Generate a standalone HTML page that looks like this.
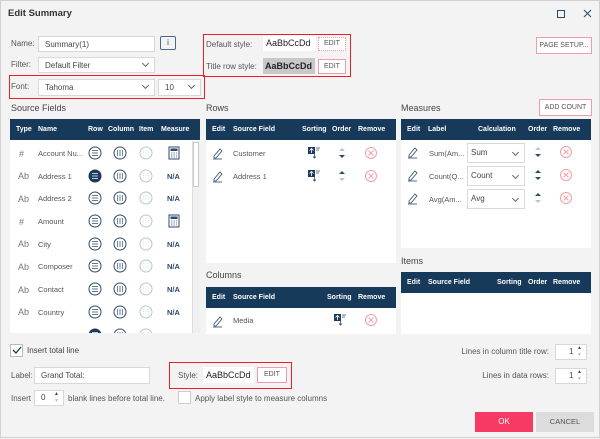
<!DOCTYPE html>
<html><head><meta charset="utf-8"><style>
*{box-sizing:border-box;margin:0;padding:0}
body{width:600px;height:438px;background:#f3f3f3;font-family:"Liberation Sans",sans-serif;font-size:8px;color:#333;position:relative;overflow:hidden;border:1px solid #d0d0d0}
.a{position:absolute}
.in{position:absolute;background:#fff;border:1px solid #d8d8d8;padding-left:6px;line-height:15px;font-size:8px;color:#444}
.chev{position:absolute;right:6px;top:3px;width:5px;height:5px;border-right:1px solid #666;border-bottom:1px solid #666;transform:rotate(45deg)}
.btn{position:absolute;background:#fff;border:1px solid #f29aae;text-align:center;font-size:7px;color:#555}
.red{position:absolute;border:1.5px solid #e8202a}
.hd{position:absolute;background:#183a5a;color:#fff;font-weight:bold;font-size:7px}
.hd span{position:absolute;top:7px}
.tb{position:absolute;background:#fff}
.lbl{position:absolute;font-size:9px;color:#444}
.t{position:absolute;font-size:7.5px;color:#555}
</style></head><body>
<div class="a" style="left:7px;top:7px;font-size:9.5px;font-weight:bold;color:#333">Edit Summary</div>
<svg class="a" style="left:555px;top:8px" width="40" height="12"><rect x="1.5" y="1.5" width="7" height="7" fill="none" stroke="#2c4a6e" stroke-width="1"/><path d="M28 1l7 7M35 1l-7 7" stroke="#2c4a6e" stroke-width="1"/></svg>

<div class="t" style="left:10px;top:38px;font-size:8px">Name:</div>
<div class="in" style="left:37px;top:35px;width:117px;height:16px">Summary(1)</div>
<div class="a" style="left:159px;top:35px;width:16px;height:14px;border:1px solid #4a6a8a;border-radius:2px;text-align:center;font-size:8px;color:#2c4a6e;line-height:12px">i</div>
<div class="t" style="left:10px;top:59px;font-size:8px">Filter:</div>
<div class="in" style="left:37px;top:56px;width:117px;height:16px">Default Filter<div class="chev"></div></div>
<div class="red" style="left:8px;top:74px;width:196px;height:24px"></div>
<div class="t" style="left:10px;top:81px;font-size:8px">Font:</div>
<div class="in" style="left:37px;top:78px;width:117px;height:17px;line-height:16px">Tahoma<div class="chev"></div></div>
<div class="in" style="left:157px;top:78px;width:43px;height:17px;line-height:16px">10<div class="chev"></div></div>

<div class="red" style="left:202px;top:33px;width:148px;height:43px"></div>
<div class="t" style="left:205px;top:39px;font-size:8px">Default style:</div>
<div class="a" style="left:262px;top:35px;width:53px;height:15px;background:#fff;font-size:9px;line-height:15px;padding-left:3px;color:#222">AaBbCcDd</div>
<div class="btn" style="left:317px;top:36px;width:28px;height:14px;line-height:12px;border-style:dotted">EDIT</div>
<div class="t" style="left:205px;top:61px;font-size:8px">Title row style:</div>
<div class="a" style="left:262px;top:57px;width:52px;height:16px;background:#c8c8c8;font-size:9px;font-weight:bold;line-height:16px;padding-left:2px;color:#222">AaBbCcDd</div>
<div class="btn" style="left:317px;top:58px;width:28px;height:15px;line-height:13px">EDIT</div>
<div class="btn" style="left:535px;top:36px;width:56px;height:17px;line-height:15px">PAGE SETUP...</div>

<div class="lbl" style="left:10px;top:102px">Source Fields</div>
<div class="tb" style="left:9px;top:118px;width:190px;height:214px"></div>
<div class="hd" style="left:9px;top:118px;width:190px;height:21px"><span style="left:6px">Type</span><span style="left:28px">Name</span><span style="left:78px">Row</span><span style="left:98px">Column</span><span style="left:129px">Item</span><span style="left:151px">Measure</span></div>
<div class="a" style="left:191px;top:140px;width:8px;height:192px;background:#f0f0f0;border-left:1px solid #ddd"></div>
<div class="a" style="left:192px;top:141px;width:6px;height:45px;background:#fff;border:1px solid #ccc"></div>

<div class="lbl" style="left:205px;top:102px">Rows</div>
<div class="tb" style="left:205px;top:118px;width:190px;height:144px"></div>
<div class="hd" style="left:205px;top:118px;width:190px;height:21px"><span style="left:6px">Edit</span><span style="left:27px">Source Field</span><span style="left:96px">Sorting</span><span style="left:126px">Order</span><span style="left:152px">Remove</span></div>
<div class="t" style="left:232px;top:148px">Customer</div>
<div class="t" style="left:232px;top:171px">Address 1</div>

<div class="lbl" style="left:205px;top:269px">Columns</div>
<div class="tb" style="left:205px;top:286px;width:190px;height:47px"></div>
<div class="hd" style="left:205px;top:286px;width:190px;height:21px"><span style="left:6px">Edit</span><span style="left:27px">Source Field</span><span style="left:121px">Sorting</span><span style="left:152px">Remove</span></div>
<div class="t" style="left:232px;top:315px">Media</div>

<div class="lbl" style="left:400px;top:102px">Measures</div>
<div class="btn" style="left:538px;top:98px;width:53px;height:17px;line-height:15px">ADD COUNT</div>
<div class="tb" style="left:400px;top:118px;width:190px;height:129px"></div>
<div class="hd" style="left:400px;top:118px;width:190px;height:21px"><span style="left:6px">Edit</span><span style="left:27px">Label</span><span style="left:77px">Calculation</span><span style="left:127px">Order</span><span style="left:152px">Remove</span></div>
<div class="t" style="left:428px;top:148px">Sum(Am...</div>
<div class="t" style="left:428px;top:171px">Count(Q...</div>
<div class="t" style="left:428px;top:194px">Avg(Am...</div>
<div class="in" style="left:466px;top:142px;width:58px;height:20px;line-height:18px;padding-left:3px">Sum<div class="chev" style="top:6px"></div></div>
<div class="in" style="left:466px;top:165px;width:58px;height:20px;line-height:18px;padding-left:3px">Count<div class="chev" style="top:6px"></div></div>
<div class="in" style="left:466px;top:188px;width:58px;height:20px;line-height:18px;padding-left:3px">Avg<div class="chev" style="top:6px"></div></div>

<div class="lbl" style="left:400px;top:255px">Items</div>
<div class="tb" style="left:400px;top:271px;width:190px;height:62px"></div>
<div class="hd" style="left:400px;top:271px;width:190px;height:21px"><span style="left:6px">Edit</span><span style="left:27px">Source Field</span><span style="left:96px">Sorting</span><span style="left:127px">Order</span><span style="left:152px">Remove</span></div>

<svg class="a" style="left:0;top:0" width="600" height="438">
<defs>
<g id="row"><circle r="6" fill="#fff" stroke="#2c4a6e"/><path d="M-3-2.5h6M-3 0h6M-3 2.5h6" stroke="#2c4a6e" stroke-width=".7"/></g>
<g id="rowf"><circle r="6.5" fill="#1b3a5c"/><path d="M-3-2.5h6M-3 0h6M-3 2.5h6" stroke="#fff" stroke-width=".7"/></g>
<g id="col"><circle r="6" fill="#fff" stroke="#2c4a6e"/><path d="M-2.3-3v6M0-3v6M2.3-3v6" stroke="#2c4a6e" stroke-width=".7"/></g>
<g id="item"><circle r="6" fill="#fff" stroke="#b8c4d2"/><path d="M-2.3-3v6M0-3v6M2.3-3v6" stroke="#d0d8e2" stroke-width=".6" stroke-dasharray="1 1"/></g>
<g id="calc"><rect x="-5" y="-6" width="10" height="12" fill="#fff" stroke="#2c4a6e"/><rect x="-3.5" y="-4.5" width="7" height="2.5" fill="#2c4a6e"/><path d="M-3 0h6M-3 2h6M-3 4h6" stroke="#7a8fa8" stroke-dasharray="1.5 1"/></g>
<g id="pen"><path d="M-4 3l6-7 2 2-6 7h-2z" fill="none" stroke="#2c4a6e" stroke-width=".8"/><path d="M-5 6h9" stroke="#2c4a6e" stroke-width=".8"/></g>
<g id="sort"><rect x="-6" y="-6" width="7" height="7" fill="#1b3a5c"/><path d="M-2.5-4.5v4.5M-4.5-2.5l2-2 2 2" stroke="#fff" stroke-width=".8" fill="none"/><path d="M2-5h4M2-3h3M0.5 0v5M-1 3.5l1.5 1.5 1.5-1.5" stroke="#2c4a6e" stroke-width=".8" fill="none"/></g>
<g id="rem"><circle r="5.5" fill="none" stroke="#f2a0a8"/><path d="M-2.5-2.5l5 5M2.5-2.5l-5 5" stroke="#f2a0a8"/></g>
<g id="ordD"><path d="M-3-2l3-3 3 3z" fill="#b8c4d2"/><path d="M-3 2h6l-3 3z" fill="#2c4a6e"/></g>
<g id="ordU"><path d="M-3-2l3-3 3 3z" fill="#2c4a6e"/><path d="M-3 2h6l-3 3z" fill="#b8c4d2"/></g>
<g id="ordB"><path d="M-3-2l3-3 3 3z" fill="#2c4a6e"/><path d="M-3 2h6l-3 3z" fill="#2c4a6e"/></g>
</defs>
<g font-family="Liberation Sans" font-size="7.5" fill="#555">
<text x="37" y="155">Account Nu...</text><text x="37" y="178">Address 1</text><text x="37" y="200">Address 2</text><text x="37" y="223">Amount</text><text x="37" y="246">City</text><text x="37" y="268">Composer</text><text x="37" y="291">Contact</text><text x="37" y="314">Country</text>
</g>
<g font-family="Liberation Sans" font-size="9" fill="#777">
<text x="18" y="156">#</text><text x="17" y="178">Ab</text><text x="17" y="201">Ab</text><text x="18" y="224">#</text><text x="17" y="246">Ab</text><text x="17" y="269">Ab</text><text x="17" y="292">Ab</text><text x="17" y="314">Ab</text>
</g>
<use href="#row" x="94" y="152"/><use href="#rowf" x="94" y="175"/><use href="#row" x="94" y="197"/><use href="#row" x="94" y="220"/><use href="#row" x="94" y="243"/><use href="#row" x="94" y="265"/><use href="#row" x="94" y="288"/><use href="#row" x="94" y="311"/>
<use href="#col" x="119" y="152"/><use href="#col" x="119" y="175"/><use href="#col" x="119" y="197"/><use href="#col" x="119" y="220"/><use href="#col" x="119" y="243"/><use href="#col" x="119" y="265"/><use href="#col" x="119" y="288"/><use href="#col" x="119" y="311"/>
<use href="#item" x="145" y="152"/><use href="#item" x="145" y="175"/><use href="#item" x="145" y="197"/><use href="#item" x="145" y="220"/><use href="#item" x="145" y="243"/><use href="#item" x="145" y="265"/><use href="#item" x="145" y="288"/><use href="#item" x="145" y="311"/>
<use href="#calc" x="173" y="152"/><use href="#calc" x="173" y="220"/>
<g font-family="Liberation Sans" font-size="7.5" font-weight="bold" fill="#2c4a6e"><text x="166" y="178">N/A</text><text x="166" y="200">N/A</text><text x="166" y="246">N/A</text><text x="166" y="268">N/A</text><text x="166" y="291">N/A</text><text x="166" y="314">N/A</text></g>
<clipPath id="cp"><rect x="9" y="320" width="182" height="12"/></clipPath>
<g clip-path="url(#cp)"><use href="#rowf" x="94" y="334"/><use href="#col" x="119" y="334"/><use href="#item" x="145" y="334"/></g>
<use href="#pen" x="217" y="152"/><use href="#pen" x="217" y="175"/><use href="#pen" x="217" y="320"/>
<use href="#sort" x="313" y="152"/><use href="#sort" x="313" y="175"/><use href="#sort" x="339" y="319"/>
<use href="#ordD" x="341" y="152"/><use href="#ordU" x="341" y="175"/>
<use href="#rem" x="370" y="152"/><use href="#rem" x="370" y="175"/><use href="#rem" x="370" y="319"/>
<use href="#pen" x="412" y="151"/><use href="#pen" x="412" y="174"/><use href="#pen" x="412" y="197"/>
<use href="#ordD" x="537" y="151"/><use href="#ordB" x="537" y="174"/><use href="#ordU" x="537" y="197"/>
<use href="#rem" x="565" y="151"/><use href="#rem" x="565" y="174"/><use href="#rem" x="565" y="197"/>
<rect x="9.5" y="343.5" width="12" height="12" fill="#fff" stroke="#bbb"/><path d="M12 349l3 3 5-6" fill="none" stroke="#1b3a5c" stroke-width="1.3"/>
<rect x="177.5" y="390.5" width="12" height="12" fill="#fff" stroke="#ccc"/>
</svg>

<div class="t" style="left:26px;top:345px;font-size:8px;color:#444">Insert total line</div>
<div class="t" style="left:10px;top:370px;font-size:8px">Label:</div>
<div class="in" style="left:33px;top:366px;width:116px;height:17px;line-height:15px">Grand Total:</div>
<div class="red" style="left:168px;top:361px;width:123px;height:27px"></div>
<div class="t" style="left:177px;top:370px;font-size:8px">Style:</div>
<div class="a" style="left:202px;top:366px;width:51px;height:16px;background:#fff;font-size:9px;line-height:16px;padding-left:3px;color:#222">AaBbCcDd</div>
<div class="btn" style="left:256px;top:366px;width:30px;height:16px;line-height:14px">EDIT</div>
<div class="t" style="left:10px;top:393px;font-size:8px">Insert</div>
<div class="in" style="left:33px;top:389px;width:30px;height:16px;line-height:14px">0<span style="position:absolute;right:4px;top:0;font-size:5px;line-height:7px;color:#2c4a6e">▲<br><span style="color:#bbb">▼</span></span></div>
<div class="t" style="left:67px;top:393px;font-size:8px">blank lines before total line.</div>
<div class="t" style="left:194px;top:393px;font-size:8px">Apply label style to measure columns</div>

<div class="t" style="left:440px;top:346px;width:108px;text-align:right;font-size:8px">Lines in column title row:</div>
<div class="in" style="left:554px;top:343px;width:32px;height:16px;line-height:14px;padding-left:13px">1<span style="position:absolute;right:4px;top:0;font-size:5px;line-height:7px;color:#2c4a6e">▲<br><span style="color:#bbb">▼</span></span></div>
<div class="t" style="left:440px;top:370px;width:108px;text-align:right;font-size:8px">Lines in data rows:</div>
<div class="in" style="left:554px;top:367px;width:32px;height:16px;line-height:14px;padding-left:13px">1<span style="position:absolute;right:4px;top:0;font-size:5px;line-height:7px;color:#2c4a6e">▲<br><span style="color:#bbb">▼</span></span></div>

<div class="a" style="left:474px;top:411px;width:58px;height:20px;background:#f63a63;color:#fff;text-align:center;line-height:20px;font-size:8px">OK</div>
<div class="a" style="left:535px;top:411px;width:58px;height:20px;background:#dcdcdc;color:#555;text-align:center;line-height:20px;font-size:7.5px">CANCEL</div>
</body></html>
